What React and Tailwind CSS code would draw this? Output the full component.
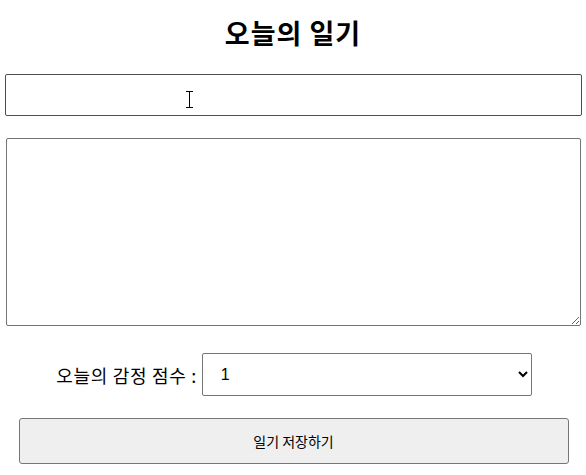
import React from "react";

export default function App() {
  return (
    <div className="relative w-[586px] h-[475px] bg-white text-black flex flex-col items-center font-['Noto_Sans_CJK_KR','Noto_Sans',sans-serif]">
      <h2 className="mt-[17px] text-[27px] leading-[32px] font-bold tracking-[1px] font-['Noto_Sans_CJK_KR','Noto_Sans',sans-serif]">
        오늘의 일기
      </h2>
      <input
        type="text"
        className="mt-[25px] ml-[1px] w-[577px] h-[42px] border border-[#4f4f4f] rounded-[2px] px-[10px] outline-none"
      />
      <textarea className="mt-[22px] ml-[1px] w-[575px] h-[188px] border border-[#767676] rounded-[2px] p-[10px] outline-none resize" />
      <div className="mt-[27px] flex items-center justify-center ml-[2px]">
        <span className="text-[18px] leading-[22px] tracking-[0.7px] mr-[5px] font-['Noto_Sans_CJK_KR','Noto_Sans',sans-serif]">
          오늘의 감정 점수 :
        </span>
        <select
          className="w-[330px] h-[43px] border border-[#767676] rounded-[2px] pl-[14px] pr-[8px] !text-[16px] bg-white outline-none font-['Liberation_Sans','Noto_Sans_CJK_KR',sans-serif]"
        >
          <option>1</option>
          <option>2</option>
          <option>3</option>
          <option>4</option>
          <option>5</option>
        </select>
      </div>
      <button className="mt-[22px] ml-[1px] w-[550px] h-[46px] border border-[#767676] rounded-[3px] bg-[#efefef] text-[14px] text-black font-['Noto_Sans_CJK_KR','Noto_Sans',sans-serif]">
        일기 저장하기
      </button>
      <svg
        className="absolute left-[185px] top-[91px] pointer-events-none"
        width="9"
        height="17"
        viewBox="0 0 9 17"
      >
        <path d="M1 0.5 H8 M4.5 0.5 V16.5 M1 16.5 H8" stroke="#000" strokeWidth="1" fill="none" />
      </svg>
    </div>
  );
}
